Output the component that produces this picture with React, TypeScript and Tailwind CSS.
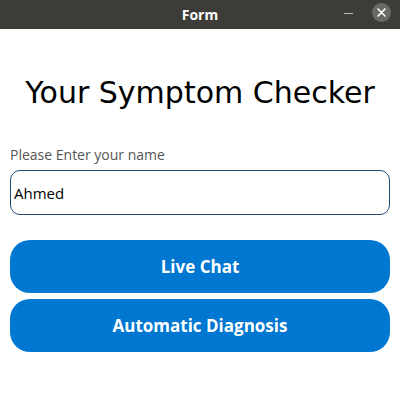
export default function App() {
  return (
    <div
      style={{ fontFamily: "'Open Sans', 'Noto Sans', sans-serif" }}
      className="w-[400px] h-[409px] bg-white flex flex-col overflow-hidden"
    >
      <div className="h-[29px] bg-[#3d3c39] flex items-center relative shrink-0">
        <div className="flex-1 text-center text-white text-[14px] font-bold">Form</div>
        <div className="absolute left-[344px] top-[13px] w-[9px] h-[1px] bg-[#bdbdbd]" />
        <div className="absolute left-[372px] top-[3px] w-[19px] h-[19px] rounded-full bg-[#6a6966] flex items-center justify-center">
          <svg width="9" height="9" viewBox="0 0 9 9">
            <path d="M1 1L8 8M8 1L1 8" stroke="#fff" strokeWidth="1.6" strokeLinecap="round" />
          </svg>
        </div>
      </div>
      <div className="px-[10px] flex flex-col">
        <h1
          style={{ fontFamily: "'DejaVu Sans', sans-serif" }}
          className="mt-[44px] text-center text-[30px] leading-[40px] text-black"
        >
          Your Symptom Checker
        </h1>
        <label className="mt-[33px] text-[14px] leading-[18px] text-[#555555]">Please Enter your name</label>
        <input
          defaultValue="Ahmed"
          className="mt-[6px] h-[45px] rounded-[10px] border border-[#1f4a73] px-[3px] text-[15px] text-black outline-none"
        />
        <button className="mt-[25px] h-[53px] rounded-[20px] bg-[#0077d0] text-white text-[17px] font-bold">
          Live Chat
        </button>
        <button className="mt-[6px] h-[53px] rounded-[20px] bg-[#0077d0] text-white text-[17px] font-bold">
          Automatic Diagnosis
        </button>
      </div>
    </div>
  );
}
